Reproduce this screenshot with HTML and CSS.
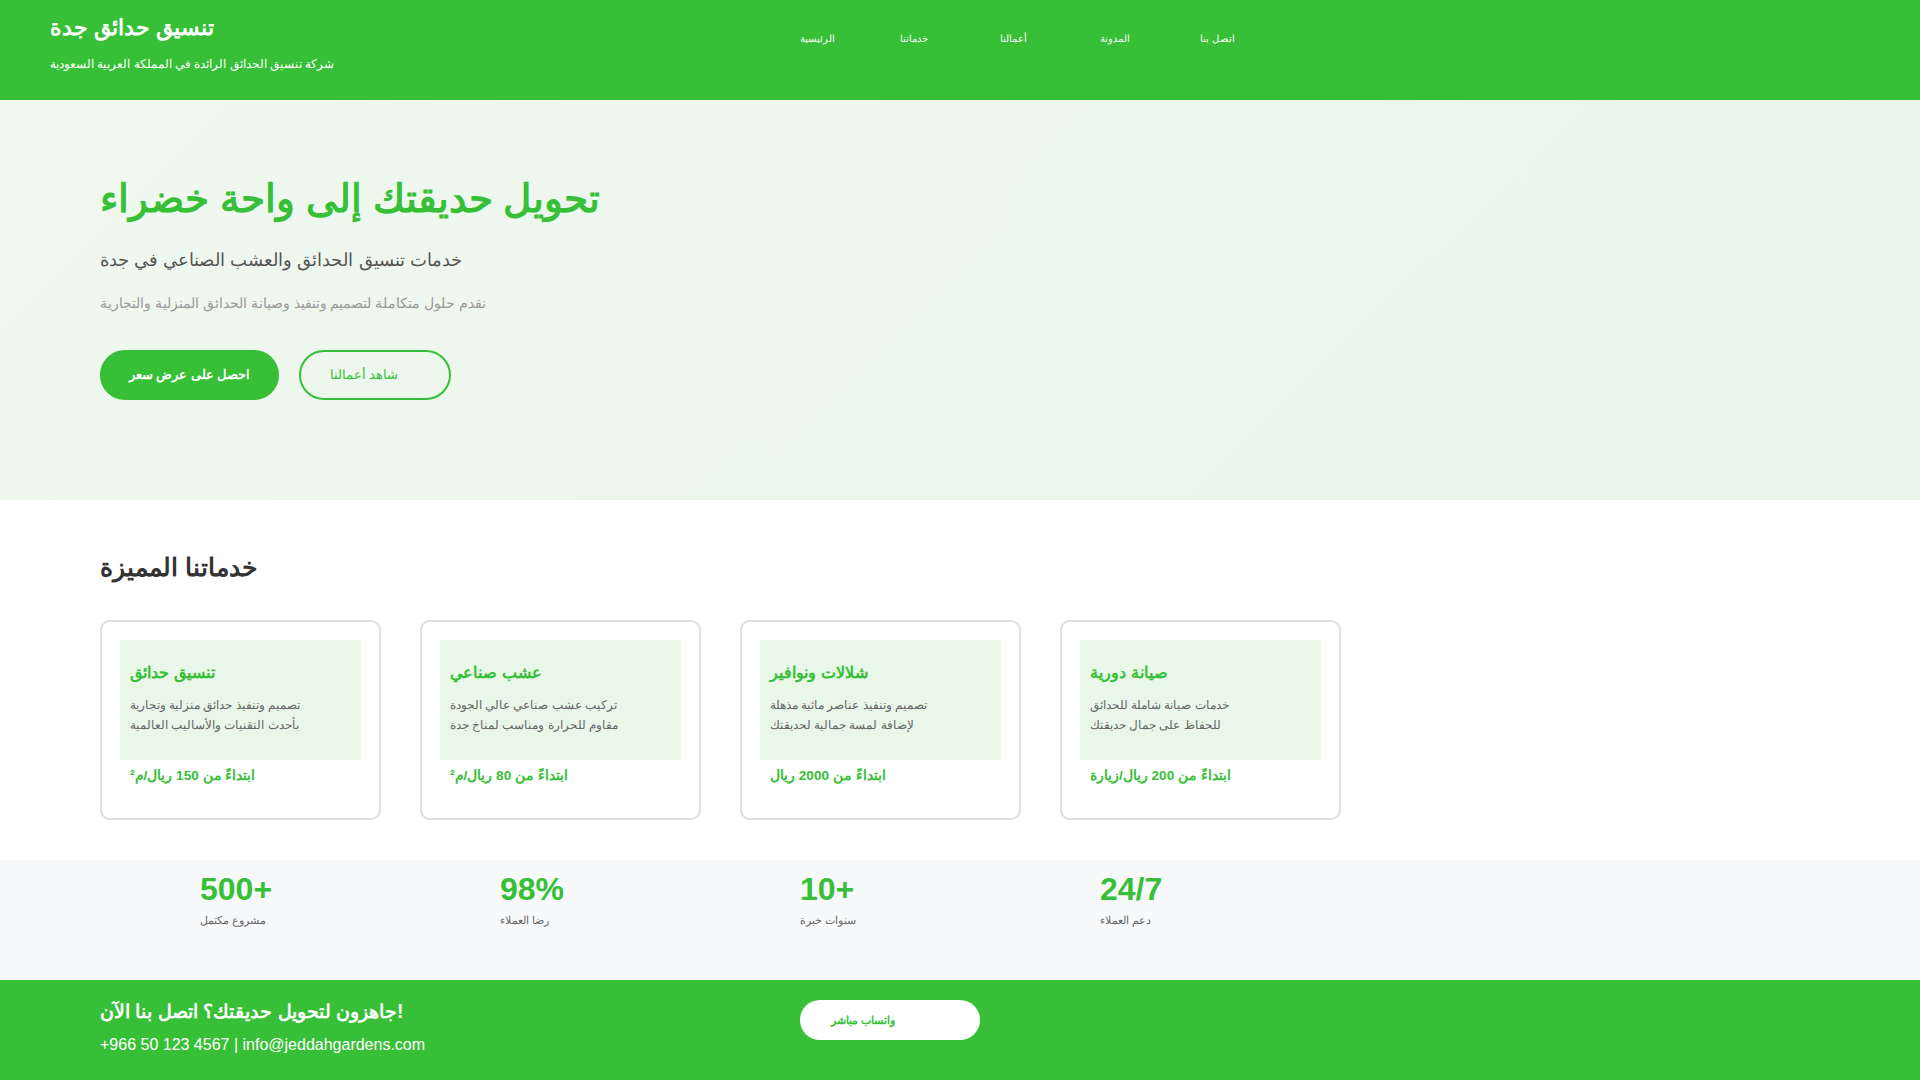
FILE: index.html
```html
<!DOCTYPE html>
<html lang="ar">
<head>
<meta charset="utf-8">
<title>تنسيق حدائق جدة</title>
<link rel="stylesheet" href="styles.css">
</head>
<body>
<header class="site-header">
  <div class="brand">
    <div class="brand-title">تنسيق حدائق جدة</div>
    <div class="brand-sub">شركة تنسيق الحدائق الرائدة في المملكة العربية السعودية</div>
  </div>
  <nav class="nav">
    <a class="nav-link" href="#">الرئيسية</a>
    <a class="nav-link" href="#">خدماتنا</a>
    <a class="nav-link" href="#">أعمالنا</a>
    <a class="nav-link" href="#">المدونة</a>
    <a class="nav-link" href="#">اتصل بنا</a>
  </nav>
</header>

<section class="hero">
  <h1 class="hero-title">تحويل حديقتك إلى واحة خضراء</h1>
  <h2 class="hero-sub">خدمات تنسيق الحدائق والعشب الصناعي في جدة</h2>
  <p class="hero-text">نقدم حلول متكاملة لتصميم وتنفيذ وصيانة الحدائق المنزلية والتجارية</p>
  <div class="hero-actions">
    <a class="btn btn-primary" href="#">احصل على عرض سعر</a>
    <a class="btn btn-outline" href="#">شاهد أعمالنا</a>
  </div>
</section>

<section class="services">
  <h2 class="section-title">خدماتنا المميزة</h2>
  <div class="cards">
    <div class="card">
      <div class="card-box">
        <h3 class="card-title">تنسيق حدائق</h3>
        <p class="card-desc">تصميم وتنفيذ حدائق منزلية وتجارية<br>بأحدث التقنيات والأساليب العالمية</p>
      </div>
      <div class="card-price">ابتداءً من 150 ريال/م²</div>
    </div>
    <div class="card">
      <div class="card-box">
        <h3 class="card-title">عشب صناعي</h3>
        <p class="card-desc">تركيب عشب صناعي عالي الجودة<br>مقاوم للحرارة ومناسب لمناخ جدة</p>
      </div>
      <div class="card-price">ابتداءً من 80 ريال/م²</div>
    </div>
    <div class="card">
      <div class="card-box">
        <h3 class="card-title">شلالات ونوافير</h3>
        <p class="card-desc">تصميم وتنفيذ عناصر مائية مذهلة<br>لإضافة لمسة جمالية لحديقتك</p>
      </div>
      <div class="card-price">ابتداءً من 2000 ريال</div>
    </div>
    <div class="card">
      <div class="card-box">
        <h3 class="card-title">صيانة دورية</h3>
        <p class="card-desc">خدمات صيانة شاملة للحدائق<br>للحفاظ على جمال حديقتك</p>
      </div>
      <div class="card-price">ابتداءً من 200 ريال/زيارة</div>
    </div>
  </div>
</section>

<section class="stats">
  <div class="stat"><div class="stat-num">500+</div><div class="stat-label">مشروع مكتمل</div></div>
  <div class="stat"><div class="stat-num">98%</div><div class="stat-label">رضا العملاء</div></div>
  <div class="stat"><div class="stat-num">10+</div><div class="stat-label">سنوات خبرة</div></div>
  <div class="stat"><div class="stat-num">24/7</div><div class="stat-label">دعم العملاء</div></div>
</section>

<footer class="cta">
  <div class="cta-text">
    <div class="cta-title">جاهزون لتحويل حديقتك؟ اتصل بنا الآن!</div>
    <div class="cta-contact">+966 50 123 4567 | info@jeddahgardens.com</div>
  </div>
  <a class="btn-white" href="#">واتساب مباشر</a>
</footer>
</body>
</html>
```
FILE: styles.css
```css
* { box-sizing: border-box; }
html, body { margin: 0; padding: 0; }
body {
  font-family: "Liberation Sans", serif;
  background: #ffffff;
  color: #333;
  width: 1920px;
  height: 1080px;
  overflow: hidden;
}
a { text-decoration: none; }

.site-header {
  height: 100px;
  background: #37bf37;
  color: #fff;
  display: flex;
  align-items: flex-start;
  padding: 0 50px;
}
.brand { width: 750px; padding-top: 14px; }
.brand-title { font-size: 22px; font-weight: bold; line-height: 28px; }
.brand-sub { font-size: 12px; line-height: 20px; margin-top: 12px; }
.nav { display: flex; padding-top: 30px; }
.nav-link { display: block; width: 100px; color: #fff; font-size: 10.3px; line-height: 18px; }

.hero {
  height: 400px;
  padding: 74px 100px 0;
  background: linear-gradient(135deg, #f0f8f0 0%, #e8f5e8 100%);
}
.hero-title {
  margin: 0;
  font-size: 39px;
  line-height: 50px;
  color: #37bf37;
  font-weight: bold;
}
.hero-sub {
  margin: 21px 0 0;
  font-size: 18.4px;
  line-height: 30px;
  font-weight: normal;
  color: #555;
}
.hero-text {
  margin: 16px 0 0;
  font-size: 14px;
  line-height: 24px;
  color: #999;
}
.hero-actions { display: flex; gap: 20px; margin-top: 35px; }
.btn {
  display: block;
  height: 50px;
  border-radius: 25px;
  font-size: 12.6px;
  line-height: 46px;
}
.btn-primary {
  width: 179px;
  background: #37bf37;
  color: #fff;
  font-weight: bold;
  text-align: center;
  border: 2px solid #37bf37;
}
.btn-outline {
  width: 152px;
  border: 2px solid #37bf37;
  color: #37bf37;
  padding-left: 29px;
}

.services { padding: 50px 100px 40px; }
.section-title { margin: 0; font-size: 25px; line-height: 34px; color: #333; font-weight: bold; }
.cards { display: flex; gap: 39px; margin-top: 36px; }
.card {
  width: 281px;
  height: 200px;
  border: 2px solid #e0e0e0;
  border-radius: 10px;
  padding: 18px 18px;
}
.card-box {
  height: 120px;
  background: #e8f7e8;
  padding: 20px 10px 0;
}
.card-title { margin: 0; font-size: 16.4px; line-height: 24px; color: #37bf37; font-weight: bold; }
.card-desc { margin: 11px 0 0; font-size: 11.5px; line-height: 20px; color: #666; }
.card-price { margin-top: 6px; padding-left: 10px; font-size: 13.6px; line-height: 20px; font-weight: bold; color: #37bf37; }

.stats {
  height: 120px;
  background: #f8f9fa;
  display: flex;
  padding: 9px 0 0 200px;
}
.stat { width: 300px; }
.stat-num { font-size: 32px; line-height: 40px; font-weight: bold; color: #37bf37; }
.stat-label { font-size: 10.8px; line-height: 18px; color: #666; margin-top: 2px; }

.cta {
  height: 100px;
  background: #37bf37;
  color: #fff;
  display: flex;
  align-items: flex-start;
  padding: 19px 0 0 100px;
}
.cta-text { width: 700px; }
.cta-title { font-size: 19.4px; line-height: 24px; font-weight: bold; }
.cta-contact { font-size: 16px; line-height: 20px; margin-top: 12px; }
.btn-white {
  display: block;
  width: 180px;
  height: 40px;
  margin-top: 1px;
  border-radius: 20px;
  background: #fff;
  color: #37bf37;
  font-size: 11px;
  font-weight: bold;
  line-height: 40px;
  padding-left: 31px;
}
```
